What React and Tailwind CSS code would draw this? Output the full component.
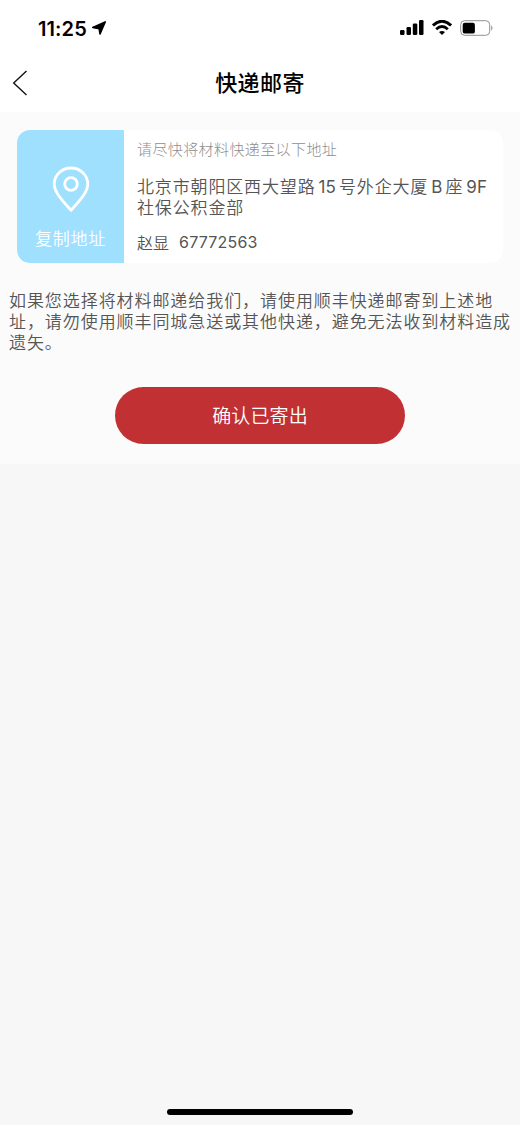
function StatusBar() {
  return (
    <div className="flex h-14 items-center justify-between pl-[38px] pr-[27px]">
      <div className="flex items-center gap-[5px]">
        <span className="mt-px font-['Inter'] text-[20px] leading-6 font-semibold tracking-[0.1px]">11:25</span>
        <svg width="14" height="14" viewBox="0 0 14 14">
          <path d="M13.2.9 8 12.9 7.2 7.8.8 6.4Z" fill="#000" stroke="#000" strokeWidth="1.6" strokeLinejoin="round" />
        </svg>
      </div>
      <div className="flex items-center">
        <svg width="24" height="16" viewBox="0 0 24 16">
          <rect x="0" y="10" width="4.5" height="5" rx="1.2" />
          <rect x="6.5" y="7" width="4.5" height="8" rx="1.2" />
          <rect x="12.8" y="3.5" width="4.5" height="11.5" rx="1.2" />
          <rect x="19" y="0" width="4.5" height="15" rx="1.2" />
        </svg>
        <svg className="ml-2" width="20" height="16" viewBox="0 0 20 16" fill="none" stroke="#000">
          <path d="M.9 5.4Q10-2.8 19.1 5.4" strokeWidth="3" />
          <path d="M4.2 9.2Q10 3.8 15.8 9.2" strokeWidth="2.8" />
          <path d="M7 12.1Q10 9.8 13 12.1L10 15Z" fill="#000" stroke="none" />
        </svg>
        <svg className="ml-2" width="33" height="16" viewBox="0 0 33 16">
          <rect x=".7" y=".7" width="29" height="14.6" rx="4" fill="none" stroke="#929292" />
          <rect x="2.7" y="2.8" width="12.2" height="10.8" rx="2.2" />
          <path d="M31.2 5.2Q33.8 8 31.2 10.8Z" fill="#929292" />
        </svg>
      </div>
    </div>
  );
}

function NavBar() {
  return (
    <div className="flex h-14 items-center pl-3">
      <svg className="mt-[-2px]" width="16" height="26" viewBox="0 0 16 26" fill="none" stroke="#111" strokeWidth="1.4">
        <path d="M14.5 1 1.7 13 14.5 25" />
      </svg>
      <h1 className="mt-[-6px] mr-7 flex-1 text-center text-[22px] leading-8 font-medium tracking-[0.4px]">快递邮寄</h1>
    </div>
  );
}

function AddressCard() {
  return (
    <section className="ml-[17px] flex h-[133px] w-[486px] overflow-hidden rounded-[13px] bg-white">
      <button className="flex w-[107px] flex-col items-center bg-[#a0e0ff] pt-[36px] text-white">
        <svg width="38" height="48" viewBox="0 0 38 48" fill="none" stroke="#fff" strokeWidth="2.8">
          <path d="M19 44.3C13 37.2 2.2 27.2 2.2 18A16.8 16 0 0 1 35.8 18C35.8 27.2 25 37.2 19 44.3Z" strokeLinejoin="round" />
          <circle cx="19" cy="18" r="6.3" />
        </svg>
        <span className="mt-[12px] text-[17px] leading-6 font-[350] tracking-[0.7px]">复制地址</span>
      </button>
      <div className="pt-[8px] pl-[13px] text-[#555]">
        <p className="text-[15px] leading-[22px] font-light tracking-[0.4px] text-[#8e8e8e]">请尽快将材料快递至以下地址</p>
        <div className="mt-[15px] text-[17px] leading-[21px] font-[350] tracking-[0.85px] whitespace-nowrap">
          <p className="h-[21px]">
            北京市朝阳区西大望路
            <span className="mx-[3px] font-['Inter'] leading-none font-normal tracking-[0.1px]">15</span>
            号外企大厦
            <span className="mx-[3px] font-['Inter'] leading-none font-normal tracking-[0.1px]">B</span>
            座
            <span className="ml-[3px] font-['Inter'] leading-none font-normal tracking-[0.1px]">9F</span>
          </p>
          <p className="h-[21px]">社保公积金部</p>
        </div>
        <p className="mt-[14px] flex gap-[10px] text-[16px] leading-[22px] font-[350]">
          <span>赵显</span>
          <span className="font-['Inter'] font-normal tracking-[0.2px]">67772563</span>
        </p>
      </div>
    </section>
  );
}

export default function App() {
  return (
    <div className="flex h-[1125px] w-[520px] flex-col bg-[#f7f7f7] font-['Noto_Sans_CJK_SC',sans-serif] text-black">
      <header className="h-[112px] bg-white">
        <StatusBar />
        <NavBar />
      </header>
      <main className="h-[352px] bg-[#fbfbfb] pt-[18px]">
        <AddressCard />
        <p className="mt-[26px] ml-[9px] text-[17px] leading-[21px] font-[350] tracking-[0.93px] whitespace-nowrap text-[#555]">
          如果您选择将材料邮递给我们，请使用顺丰快递邮寄到上述地
          <br />
          址，请勿使用顺丰同城急送或其他快递，避免无法收到材料造成
          <br />
          遗矢。
        </p>
        <button className="mt-[35px] ml-[115px] flex h-[56.5px] w-[290px] items-center justify-center rounded-full bg-[#c13033] text-[19px] font-[350] tracking-[0.1px] text-white">
          确认已寄出
        </button>
      </main>
      <div className="mx-auto mt-auto mb-[10px] h-[6px] w-[186px] rounded-full bg-black" />
    </div>
  );
}
